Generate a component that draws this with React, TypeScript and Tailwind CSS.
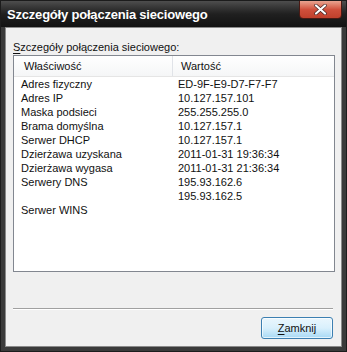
const rows: [string, string][] = [
  ["Adres fizyczny", "ED-9F-E9-D7-F7-F7"],
  ["Adres IP", "10.127.157.101"],
  ["Maska podsieci", "255.255.255.0"],
  ["Brama domyślna", "10.127.157.1"],
  ["Serwer DHCP", "10.127.157.1"],
  ["Dzierżawa uzyskana", "2011-01-31 19:36:34"],
  ["Dzierżawa wygasa", "2011-01-31 21:36:34"],
  ["Serwery DNS", "195.93.162.6"],
  ["", "195.93.162.5"],
  ["Serwer WINS", ""],
]

export default function App() {
  return (
    <div className="w-[347px] h-[352px] bg-[#3a3a3a] border border-[#1c1c1c] flex flex-col font-['Liberation_Sans',Arial,sans-serif] text-[11px] text-[#111] overflow-hidden">
      {/* title bar */}
      <div className="h-[26px] shrink-0 bg-gradient-to-b from-[#4e4e4e] via-[#202020] to-[#121212] flex items-start justify-between pl-[6px] pr-[4px]">
        <span className="mt-[6px] text-white font-bold text-[13px] tracking-[-0.2px] leading-[16px]">Szczegóły połączenia sieciowego</span>
        <div className="w-[43px] h-[19px] -mt-px rounded-b-[4px] border border-[#4a1a14] bg-gradient-to-b from-[#e8a390] via-[#d0503c] to-[#c0402c] flex items-center justify-center">
          <svg width="13" height="11" viewBox="0 0 13 11">
            <path d="M2 1.5 L11 9.5 M11 1.5 L2 9.5" stroke="#3a2020" strokeWidth="3.4" strokeLinecap="round" />
            <path d="M2 1.5 L11 9.5 M11 1.5 L2 9.5" stroke="#ffffff" strokeWidth="2.2" strokeLinecap="round" />
          </svg>
        </div>
      </div>

      {/* client area */}
      <div className="flex-1 mx-[4px] mb-[4px] border border-[#8a8a8a] bg-[#f0f0f0] flex flex-col pl-[7px] pr-[6px]">
        <div className="mt-[12px] h-[14px] leading-[14px]">
          <span className="underline underline-offset-2">S</span>zczegóły połączenia sieciowego:
        </div>
        <div className="h-[217px] mt-px border border-[#828790] bg-white flex flex-col">
          <div className="h-[21px] flex bg-gradient-to-b from-white to-[#f5f6f7] border-b border-[#e5e5e5]">
            <div className="w-[159px] border-r border-[#e0e3e8] pl-[10px] flex items-center">Właściwość</div>
            <div className="flex-1 pl-[8px] flex items-center">Wartość</div>
          </div>
          {rows.map(([k, v], i) => (
            <div key={i} className="h-[14px] leading-[14px] flex">
              <div className="w-[164px] pl-[7px]">{k}</div>
              <div className="flex-1">{v}</div>
            </div>
          ))}
        </div>
        <div className="mt-[36px] mr-[2px] h-[2px] border-t border-[#a0a0a0] border-b border-b-white" />
        <div className="mt-[7px] flex justify-end pr-[2px]">
          <button className="w-[72px] h-[22px] rounded-[3px] border border-[#3c7fb1] bg-gradient-to-b from-[#eaf6fd] via-[#d9f0fc] to-[#a7d9f5] shadow-[inset_0_0_0_1px_#ffffffaa] leading-[18px] text-[11px]">
            <span className="underline underline-offset-2">Z</span>amknij
          </button>
        </div>
      </div>
    </div>
  )
}
